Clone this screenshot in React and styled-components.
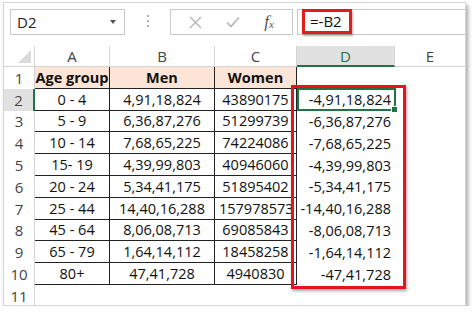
import React from "react";
import styled, { createGlobalStyle } from "styled-components";

const GlobalStyle = createGlobalStyle`
  html, body {
    margin: 0;
    padding: 0;
    background: #ffffff;
  }
  body {
    font-family: "Open Sans", "Noto Sans", sans-serif;
  }
`;

const COLS = [75, 105, 82, 98, 71];
const ROW_H = 21.8;

const rows = [
  ["0 - 4", "4,91,18,824", "43890175", "-4,91,18,824"],
  ["5 - 9", "6,36,87,276", "51299739", "-6,36,87,276"],
  ["10 - 14", "7,68,65,225", "74224086", "-7,68,65,225"],
  ["15- 19", "4,39,99,803", "40946060", "-4,39,99,803"],
  ["20 - 24", "5,34,41,175", "51895402", "-5,34,41,175"],
  ["25 - 44", "14,40,16,288", "157978573", "-14,40,16,288"],
  ["45 - 64", "8,06,08,713", "69085843", "-8,06,08,713"],
  ["65 - 79", "1,64,14,112", "18458258", "-1,64,14,112"],
  ["80+", "47,41,728", "4940830", "-47,41,728"],
];

const Frame = styled.div`
  margin: 2px 0 0 3px;
  width: 461px;
  height: 302px;
  border: 1px solid #d6d6d6;
  box-shadow: 2px 3px 4px rgba(0, 0, 0, 0.35);
  background: #fff;
  overflow: hidden;
  display: flex;
  flex-direction: column;
`;

const Toolbar = styled.div`
  height: 43px;
  display: flex;
  align-items: flex-start;
  padding: 6px 0 0 6px;
  box-sizing: border-box;
  flex-shrink: 0;
`;

const Box = styled.div`
  height: 26px;
  box-sizing: border-box;
  border: 1px solid #c9c9c9;
  background: #fff;
  display: flex;
  align-items: center;
`;

const NameBox = styled(Box)`
  width: 115px;
  padding: 0 8px 0 6px;
  justify-content: space-between;
  font-size: 15px;
  color: #222;
`;

const Caret = styled.span`
  width: 0;
  height: 0;
  border-left: 3.5px solid transparent;
  border-right: 3.5px solid transparent;
  border-top: 4px solid #555;
`;

const Dots = styled.div`
  width: 45px;
  display: flex;
  flex-direction: column;
  align-items: center;
  gap: 3px;
  padding-top: 6px;
  span {
    width: 2px;
    height: 2px;
    border-radius: 50%;
    background: #9a9a9a;
  }
`;

const Buttons = styled(Box)`
  width: 123px;
  justify-content: space-around;
  padding: 0 6px;
  color: #b8b8b8;
`;

const Fx = styled.span`
  font-family: "Liberation Serif", serif;
  font-style: italic;
  font-size: 17px;
  color: #555;
  sub {
    font-size: 11px;
    vertical-align: -1px;
  }
`;

const FormulaBox = styled(Box)`
  flex: 1;
  margin-left: 4px;
  border-right: none;
  padding-left: 4px;
  align-items: center;
`;

const Marked = styled.span`
  display: inline-flex;
  align-items: center;
  height: 25px;
  margin-top: -2px;
  padding: 0 7px 0 5px;
  border: 3px solid #e31b1b;
  box-sizing: border-box;
  font-size: 15px;
  color: #111;
  box-shadow: 1px 2px 2px rgba(0, 0, 0, 0.3);
`;

const SheetWrap = styled.div`
  position: relative;
  flex: 1;
`;

const Sheet = styled.div`
  display: grid;
  grid-template-columns: 31px ${COLS.map((c) => c + "px").join(" ")};
  grid-template-rows: 21px repeat(11, ${ROW_H}px);
`;

const ColHead = styled.div`
  display: flex;
  align-items: center;
  justify-content: center;
  font-size: 15px;
  color: ${(p) => (p.$active ? "#217346" : "#444")};
  background: ${(p) => (p.$active ? "#e1e1e1" : "#fff")};
  border-right: 1px solid #d4d4d4;
  border-bottom: ${(p) => (p.$active ? "2px solid #217346" : "1px solid #d4d4d4")};
  box-sizing: border-box;
`;

const Corner = styled.div`
  border-right: 1px solid #d4d4d4;
  border-bottom: 1px solid #d4d4d4;
  box-sizing: border-box;
  position: relative;
  &::after {
    content: "";
    position: absolute;
    right: 3px;
    bottom: 3px;
    width: 0;
    height: 0;
    border-left: 13px solid transparent;
    border-bottom: 13px solid #dadada;
  }
`;

const RowHead = styled.div`
  display: flex;
  align-items: center;
  justify-content: center;
  font-size: 15px;
  color: #444;
  background: ${(p) => (p.$active ? "#e1e1e1" : "#fff")};
  border-right: ${(p) => (p.$active ? "2px solid #217346" : "1px solid #d4d4d4")};
  box-sizing: border-box;
`;

const Cell = styled.div`
  display: flex;
  align-items: center;
  justify-content: ${(p) => (p.$right ? "flex-end" : p.$spill ? "flex-start" : "center")};
  padding: ${(p) => (p.$right ? "0 4px 0 0" : p.$spill ? "0 0 0 4px" : "0")};
  font-size: 14.5px;
  font-weight: ${(p) => (p.$bold ? 700 : 400)};
  color: #111;
  white-space: nowrap;
  overflow: hidden;
  background: ${(p) => (p.$fill ? "#fce4d6" : "#fff")};
  border-right: ${(p) => (p.$table ? "1px solid #222" : "none")};
  border-bottom: ${(p) => (p.$table ? "1px solid #222" : "none")};
  box-sizing: border-box;
`;

const Selection = styled.div`
  position: absolute;
  left: 293px;
  top: 42px;
  width: 99px;
  height: 23px;
  border: 2px solid #217346;
  box-sizing: border-box;
  &::after {
    content: "";
    position: absolute;
    right: -4px;
    bottom: -4px;
    width: 5px;
    height: 5px;
    background: #217346;
    border: 1px solid #fff;
  }
`;

const Highlight = styled.div`
  position: absolute;
  left: 287px;
  top: 39px;
  width: 115px;
  height: 204px;
  border: 3.5px solid #e8141b;
  box-sizing: border-box;
  box-shadow: 1px 2px 3px rgba(0, 0, 0, 0.35);
`;

export default function App() {
  return (
    <>
      <GlobalStyle />
      <Frame>
        <Toolbar>
          <NameBox>
            D2
            <Caret />
          </NameBox>
          <Dots>
            <span />
            <span />
            <span />
          </Dots>
          <Buttons>
            <svg width="13" height="13" viewBox="0 0 13 13">
              <path d="M1 1L12 12M12 1L1 12" stroke="#b5b5b5" strokeWidth="1.3" fill="none" />
            </svg>
            <svg width="14" height="12" viewBox="0 0 14 12">
              <path d="M1 6.5L5 10.5L13 1.5" stroke="#b5b5b5" strokeWidth="1.6" fill="none" />
            </svg>
            <Fx>
              f<sub>x</sub>
            </Fx>
          </Buttons>
          <FormulaBox>
            <Marked>=-B2</Marked>
          </FormulaBox>
        </Toolbar>
        <SheetWrap>
          <Sheet>
            <Corner />
            {["A", "B", "C", "D", "E"].map((c) => (
              <ColHead key={c} $active={c === "D"}>
                {c}
              </ColHead>
            ))}
            <RowHead>1</RowHead>
            <Cell $table $fill $bold>Age group</Cell>
            <Cell $table $fill $bold>Men</Cell>
            <Cell $table $fill $bold>Women</Cell>
            <Cell />
            <Cell />
            {rows.map((r, i) => (
              <React.Fragment key={i}>
                <RowHead $active={i === 0}>{i + 2}</RowHead>
                <Cell $table>{r[0]}</Cell>
                <Cell $table>{r[1]}</Cell>
                <Cell $table $spill={r[2].length > 8}>{r[2]}</Cell>
                <Cell $right>{r[3]}</Cell>
                <Cell />
              </React.Fragment>
            ))}
            <RowHead>11</RowHead>
            <Cell />
            <Cell />
            <Cell />
            <Cell />
            <Cell />
          </Sheet>
          <Selection />
          <Highlight />
        </SheetWrap>
      </Frame>
    </>
  );
}
